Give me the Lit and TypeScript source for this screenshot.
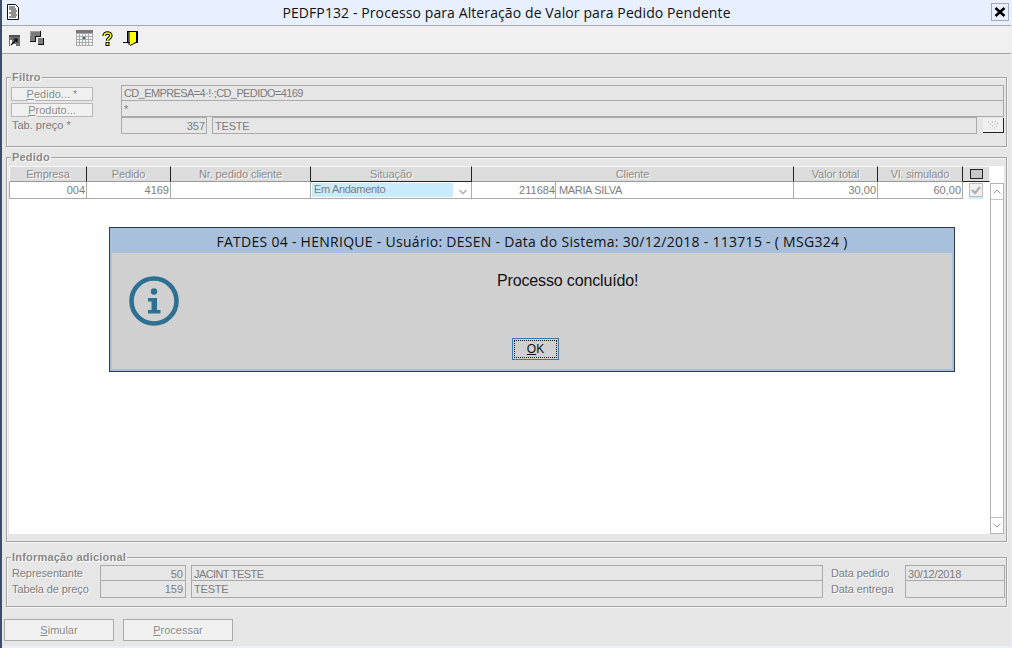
import { LitElement, html, css } from "lit";
import { customElement } from "lit/decorators.js";

const COLS = "78px 84px 140px 161px 322px 84px 85px";

@customElement("app-root")
export class AppRoot extends LitElement {
  static styles = css`
    :host {
      display: flex;
      flex-direction: column;
      position: relative;
      box-sizing: border-box;
      width: 1012px;
      height: 648px;
      overflow: hidden;
      border-left: 2px solid #3c4c6c;
      border-right: 1px solid #e8f0ff;
      background: #e6e6e6;
      font-family: "Liberation Sans", Arial, sans-serif;
      font-size: 11px;
      color: #7c7c7c;
    }
    * { box-sizing: border-box; }
    .titlebar {
      height: 26px;
      flex: none;
      background: #e8f0ff;
      border-bottom: 1px solid #a4a8ac;
      display: flex;
      align-items: center;
      padding: 0 2px 1px 5px;
    }
    .title {
      flex: 1;
      text-align: center;
      font-family: "Open Sans", sans-serif;
      font-size: 14px;
      letter-spacing: 0.1px;
      color: #111;
      padding-left: 3px;
    }
    .close {
      width: 18px;
      height: 18px;
      border: 1px solid #a0aab8;
      display: flex;
      align-items: center;
      justify-content: center;
    }
    .toolbar {
      height: 28px;
      flex: none;
      background: #f0f0f0;
      border-bottom: 1px solid #a4a4a4;
      display: flex;
      align-items: center;
      padding: 0 0 2px 7px;
    }
    .toolbar svg { display: block; flex: none; }
    .i1 { margin-top: 4px; }
    .i2 { margin: 0 0 0 9px; }
    .i3 { margin: 0 0 1px 31px; }
    .i4 { margin: 0 0 0 9px; }
    .i5 { margin: 0 0 0 10px; }
    .content { flex: 1; padding: 23px 4px 0 4px; }
    .group {
      position: relative;
      width: 1001px;
      border: 1px solid #a4a4a4;
      box-shadow: inset 1px 1px 0 #f4f4f4, 1px 1px 0 #f4f4f4;
    }
    .legend {
      position: absolute;
      top: -7px;
      left: 4px;
      background: #e6e6e6;
      padding: 0 1px;
      font-weight: bold;
      font-size: 11px;
      line-height: 13px;
      letter-spacing: 0.2px;
      color: #888;
      text-shadow: 1px 1px 0 #fff;
    }
    .filter { height: 70px; padding: 7px 2px 0 4px; }
    .frow { display: flex; height: 16px; }
    .flabel { width: 110px; flex: none; }
    .lbtn {
      width: 82px;
      height: 14px;
      margin-top: 2px;
      background: #f0f0f0;
      border: 1px solid #b8b8b8;
      text-align: center;
      line-height: 12px;
      text-shadow: 1px 1px 0 #fff;
      color: #888;
    }
    .field {
      border: 1px solid #aaa;
      background: #e6e6e6;
      padding: 0 2px;
      line-height: 15px;
      white-space: nowrap;
      overflow: hidden;
      color: #7c7c7c;
    }
    .grow { flex: 1; }
    .num { text-align: right; }
    .frow .num { padding-right: 1px; }
    .ls6 { letter-spacing: -0.6px; }
    .ls2 { letter-spacing: -0.2px; }
    .frow + .frow .field { border-top: none; line-height: 17px; }
    .frow.third { height: 17px; }
    .frow.third .flabel { line-height: 16px; padding-left: 1px; }
    .frow.third .field { border-top: 1px solid #aaa; line-height: 17px; }
    .w85 { width: 86px; flex: none; }
    .gap6 { margin-left: 5px; }
    .frow.third .desc { width: 765px; flex: none; }
    .ell {
      width: 21px;
      height: 15px;
      margin: 1px 0 0 6px;
      background: #f0f0f0;
      border-right: 1px solid #222;
      border-bottom: 1px solid #222;
      display: flex;
      align-items: center;
      justify-content: center;
    }
    .pedido {
      margin-top: 10px;
      height: 385px;
      padding: 8px 2px 0 2px;
    }
    .tablewrap {
      position: relative;
      height: 368px;
      background: #fff;
    }
    .thead { display: flex; height: 16px; }
    .grid { display: grid; }
    .th {
      background: #dcdcdc;
      border-top: 1px solid #f8f8f8;
      border-right: 1px solid #222;
      border-bottom: 1px solid #999;
      text-align: center;
      line-height: 14px;
      letter-spacing: -0.1px;
      color: #888;
      text-shadow: 1px 1px 0 #fff;
    }
    .th:first-child { border-left: 1px solid #fff; }
    .th.active { border-bottom: 1px solid #222; }
    .th.pick {
      width: 27px;
      flex: none;
      border-right: 1px solid #f8f8f8;
      border-bottom: 1px solid #222;
      display: flex;
      align-items: center;
      justify-content: center;
    }
    .box { width: 13px; height: 10px; background: #c8c8c8; border: 1px solid #222; }
    .tbody { display: flex; height: 17px; }
    .row { border-bottom: 1px solid #aaa; }
    .td {
      border-right: 1px solid #aaa;
      line-height: 16px;
      padding: 0 2px;
      color: #7c7c7c;
      white-space: nowrap;
      overflow: hidden;
    }
    .td.num { padding-right: 1px; }
    .td:first-child { border-left: 1px solid #aaa; }
    .sit { display: flex; padding: 1px 0 0 1px; }
    .sit span {
      width: 141px;
      height: 14px;
      background: #c8ecfc;
      padding-left: 2px;
      line-height: 12px;
      letter-spacing: -0.33px;
    }
    .sit svg { margin: 6px 0 0 6px; flex: none; }
    .cli { display: flex; padding: 0; }
    .cli .code { width: 84px; text-align: right; padding-right: 0; border-right: 1px solid #aaa; }
    .cli .nm { padding-left: 3px; letter-spacing: -0.35px; }
    .chk {
      width: 14px;
      height: 16px;
      margin: 1px 0 0 6px;
      border-bottom: 2px solid #c8ecfc;
    }
    .chk svg { display: block; }
    .scroll {
      position: absolute;
      left: 981px;
      top: 17px;
      width: 14px;
      height: 351px;
      border: 1px solid #b4b4b4;
      display: flex;
      flex-direction: column;
      justify-content: space-between;
    }
    .sb { height: 16px; display: flex; align-items: center; justify-content: center; }
    .sb.up { border-bottom: 1px solid #c4c4c4; }
    .sb.dn { border-top: 1px solid #c4c4c4; }
    .info {
      margin-top: 15px;
      height: 50px;
      padding: 7px 1px 0 5px;
    }
    .irow { display: flex; height: 16px; }
    .irow .field { line-height: 16px; }
    .irow.second { height: 17px; }
    .irow.second .field { border-top: none; line-height: 17px; }
    .ilab { width: 88px; flex: none; padding-top: 2px; line-height: 13px; letter-spacing: -0.1px; text-shadow: 1px 1px 0 #fff; color: #7c7c7c; }
    .ilab.r { width: 74px; margin-left: 8px; }
    .i86 { width: 86px; flex: none; }
    .idesc { width: 632px; flex: none; margin-left: 5px; }
    .i100 { width: 100px; flex: none; }
    .buttons { display: flex; gap: 9px; margin-top: 12px; margin-left: -2px; }
    .btn {
      width: 110px;
      height: 22px;
      background: #f0f0f0;
      border: 1px solid #aaa;
      text-align: center;
      line-height: 21px;
      color: #888;
      text-shadow: 1px 1px 0 #fff;
    }
    u { text-decoration: underline; }
    .bottomline {
      height: 2px;
      flex: none;
      background: #e8f0ff;
    }
    .modal {
      position: absolute;
      left: 107px;
      top: 227px;
      width: 846px;
      height: 145px;
      border: 1px solid #2c3a4c;
      background: #a8c0dc;
      padding: 0 2px 2px 2px;
      display: flex;
      flex-direction: column;
    }
    .mtitle {
      height: 25px;
      flex: none;
      text-align: center;
      font-family: "Open Sans", sans-serif;
      font-size: 14px;
      letter-spacing: 0.28px;
      line-height: 27px;
      color: #111;
    }
    .mbody { flex: 1; background: #d0d0d0; display: flex; }
    .micon { display: block; margin: 23px 0 0 17px; flex: none; }
    .mmain { flex: 1; display: flex; flex-direction: column; align-items: flex-start; }
    .msg {
      font-size: 16px;
      line-height: 18px;
      letter-spacing: -0.15px;
      color: #111;
      margin: 19px 0 0 318px;
    }
    .ok {
      width: 47px;
      height: 22px;
      margin: 48px 0 0 333px;
      border: 1px solid #3a78b0;
      padding: 1px;
      background: #d0d0d0;
    }
    .ok div {
      height: 100%;
      border: 1px dotted #111;
      text-align: center;
      line-height: 16px;
      color: #111;
      font-size: 12px;
    }
  `;

  private icons() {
    return html`
      <svg class="i1" width="12" height="13" viewBox="0 0 12 13">
        <rect width="11" height="11" y="1" fill="#707070"/>
        <rect width="11" height="2" y="1" fill="#505050"/>
        <path d="M1 6V12H7V10H3V6Z" fill="#fff"/>
        <path d="M2 11 L7.5 5.5 M4.5 5 H8 V8.5" stroke="#000" stroke-width="1.2" fill="none"/>
      </svg>
      <svg class="i2" width="15" height="15" viewBox="0 0 15 15">
        <path d="M0 0H10V5H5V10H0Z" fill="#7c7c7c"/>
        <path d="M0 0H10V1H1V5H0Z" fill="#a0a0a0"/>
        <path d="M10 0H11V6H6V11H0V10H5V5H10Z" fill="#111"/>
        <rect x="8" y="7" width="6" height="7" fill="#7c7c7c"/>
        <path d="M8 14H14V7H13V13H8Z" fill="#111"/>
      </svg>
      <svg class="i3" width="17" height="16" viewBox="0 0 17 16">
        <rect width="17" height="16" fill="#aaa"/>
        <rect width="17" height="3" fill="#777"/>
        <g fill="#f4f4f4">
          <rect x="1" y="4" width="2" height="2"/><rect x="4" y="4" width="2" height="2"/><rect x="7" y="4" width="2" height="2"/><rect x="10" y="4" width="2" height="2"/><rect x="13" y="4" width="3" height="2"/>
          <rect x="1" y="7" width="2" height="2"/><rect x="4" y="7" width="2" height="2"/><rect x="10" y="7" width="2" height="2"/><rect x="13" y="7" width="3" height="2"/>
          <rect x="1" y="10" width="2" height="2"/><rect x="4" y="10" width="2" height="2"/><rect x="7" y="10" width="2" height="2"/><rect x="10" y="10" width="2" height="2"/><rect x="13" y="10" width="3" height="2"/>
          <rect x="1" y="13" width="2" height="2"/><rect x="4" y="13" width="2" height="2"/><rect x="7" y="13" width="2" height="2"/><rect x="10" y="13" width="2" height="2"/><rect x="13" y="13" width="3" height="2"/>
        </g>
        <rect x="7" y="7" width="2" height="2" fill="#1070a8"/>
      </svg>
      <svg class="i4" width="11" height="15" viewBox="0 0 11 15">
        <path d="M2.2 5 C2.2 1 8.8 1 8.8 4.8 C8.8 7 5.5 7.2 5.5 9.8" fill="none" stroke="#000" stroke-width="3.6"/>
        <path d="M2.2 5 C2.2 1 8.8 1 8.8 4.8 C8.8 7 5.5 7.2 5.5 9.8" fill="none" stroke="#ff0" stroke-width="1.6"/>
        <rect x="4" y="11.5" width="3" height="3" fill="#ff0" stroke="#000"/>
      </svg>
      <svg class="i5" width="15" height="15" viewBox="0 0 15 15">
        <rect x="4" y="0" width="11" height="12" fill="#000"/>
        <rect x="5" y="1" width="1" height="10" fill="#999"/>
        <path d="M6 1H13V11L7 14H6Z" fill="#ff0"/>
        <path d="M6 1V14" stroke="#000" stroke-width="1"/>
        <rect x="0" y="11" width="7" height="1" fill="#000"/>
        <path d="M13 12L7 15V14L13 11Z" fill="#000"/>
      </svg>`;
  }

  render() {
    const cols = `grid-template-columns:${COLS}`;
    return html`
      <div class="titlebar">
        <svg width="12" height="16" viewBox="0 0 12 16">
          <path d="M0.5 0.5H8.5L11.5 3.5V15.5H0.5Z" fill="#fff" stroke="#111"/>
          <path d="M2 3H8M2 5H9M4 7H10M2 9H9M4 11H10M2 13H9" stroke="#222" stroke-width="1"/>
        </svg>
        <div class="title">PEDFP132 - Processo para Alteração de Valor para Pedido Pendente</div>
        <div class="close">
          <svg width="12" height="10" viewBox="0 0 12 10"><path d="M1.5 1 L10.5 9 M10.5 1 L1.5 9" stroke="#000" stroke-width="2.6"/></svg>
        </div>
      </div>
      <div class="toolbar">${this.icons()}</div>
      <div class="content">
        <div class="group filter">
          <div class="legend">Filtro</div>
          <div class="frow">
            <div class="flabel"><div class="lbtn"><u>P</u>edido... *</div></div>
            <div class="field grow ls6">CD_EMPRESA=4·!·;CD_PEDIDO=4169</div>
          </div>
          <div class="frow">
            <div class="flabel"><div class="lbtn"><u>P</u>roduto...</div></div>
            <div class="field grow">*</div>
          </div>
          <div class="frow third">
            <div class="flabel">Tab. preço *</div>
            <div class="field w85 num">357</div>
            <div class="field gap6 desc ls2">TESTE</div>
            <div class="ell">
              <svg width="12" height="9" viewBox="0 0 12 9"><path d="M1 1h1M3 3h1M5 5h1M7 7h1M5 1h1M7 3h1M9 5h1M8 0.5h1M10 2.5h1" stroke="#a8a8a8" stroke-width="1"/></svg>
            </div>
          </div>
        </div>

        <div class="group pedido">
          <div class="legend">Pedido</div>
          <div class="tablewrap">
            <div class="thead">
              <div class="grid" style=${cols}>
                <div class="th">Empresa</div>
                <div class="th">Pedido</div>
                <div class="th">Nr. pedido cliente</div>
                <div class="th active">Situação</div>
                <div class="th">Cliente</div>
                <div class="th">Valor total</div>
                <div class="th">Vl. simulado</div>
              </div>
              <div class="th pick"><div class="box"></div></div>
            </div>
            <div class="tbody">
              <div class="grid row" style=${cols}>
                <div class="td num">004</div>
                <div class="td num">4169</div>
                <div class="td"></div>
                <div class="td sit"><span>Em Andamento</span>
                  <svg width="8" height="6" viewBox="0 0 8 6"><path d="M0.5 1 L4 4.5 L7.5 1" stroke="#b8b8b8" stroke-width="1.6" fill="none"/></svg>
                </div>
                <div class="td cli"><div class="code">211684</div><div class="nm">MARIA SILVA</div></div>
                <div class="td num">30,00</div>
                <div class="td num">60,00</div>
              </div>
              <div class="chk">
                <svg width="14" height="14" viewBox="0 0 14 14">
                  <rect x="0.5" y="0.5" width="13" height="13" fill="#f0f0f0" stroke="#bbb"/>
                  <path d="M3 7 L6 10 L11 4" stroke="#b0b0b0" stroke-width="2.2" fill="none"/>
                </svg>
              </div>
            </div>
            <div class="scroll">
              <div class="sb up"><svg width="8" height="5" viewBox="0 0 8 5"><path d="M0.5 4.5 L4 1 L7.5 4.5" stroke="#999" fill="none"/></svg></div>
              <div class="sb dn"><svg width="8" height="5" viewBox="0 0 8 5"><path d="M0.5 0.5 L4 4 L7.5 0.5" stroke="#999" fill="none"/></svg></div>
            </div>
          </div>
        </div>

        <div class="group info">
          <div class="legend">Informação adicional</div>
          <div class="irow">
            <div class="ilab">Representante</div>
            <div class="field i86 num">50</div>
            <div class="field idesc ls6">JACINT TESTE</div>
            <div class="ilab r">Data pedido</div>
            <div class="field i100 ls2">30/12/2018</div>
          </div>
          <div class="irow second">
            <div class="ilab">Tabela de preço</div>
            <div class="field i86 num">159</div>
            <div class="field idesc ls2">TESTE</div>
            <div class="ilab r">Data entrega</div>
            <div class="field i100"></div>
          </div>
        </div>

        <div class="buttons">
          <div class="btn"><u>S</u>imular</div>
          <div class="btn"><u>P</u>rocessar</div>
        </div>
      </div>
      <div class="bottomline"></div>

      <div class="modal">
        <div class="mtitle">FATDES 04 - HENRIQUE - Usuário: DESEN - Data do Sistema: 30/12/2018 - 113715 - ( MSG324 )</div>
        <div class="mbody">
          <svg class="micon" width="50" height="50" viewBox="0 0 50 50">
            <circle cx="25" cy="25" r="22.5" fill="none" stroke="#2e7092" stroke-width="4.6"/>
            <circle cx="25" cy="15.5" r="3.2" fill="#2e7092"/>
            <path d="M19 22H28V34H31.5V37.5H19V34H22.5V25.5H19Z" fill="#2e7092"/>
          </svg>
          <div class="mmain">
            <div class="msg">Processo concluído!</div>
            <div class="ok"><div><u>O</u>K</div></div>
          </div>
        </div>
      </div>
    `;
  }
}
